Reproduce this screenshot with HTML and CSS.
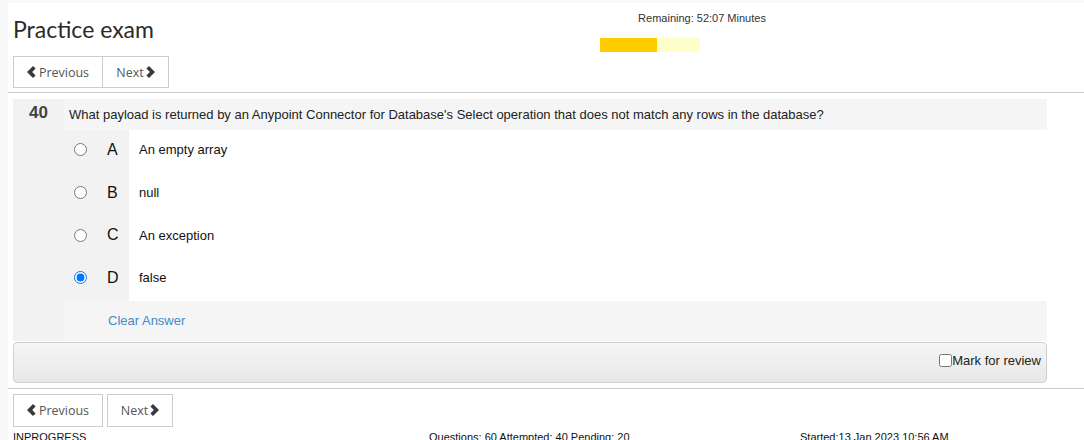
FILE: index.html
```html
<!DOCTYPE html>
<html lang="en">
<head>
<meta charset="utf-8">
<title>Practice exam</title>
<link rel="stylesheet" href="styles.css">
</head>
<body>
<div class="page">
  <header class="top">
    <div class="title-block">
      <h1 class="title">Practice exam</h1>
      <div class="btn-group">
        <button class="btn btn-prev" type="button"><svg class="chev" viewBox="0 0 9 12" width="9" height="12"><polygon points="0,6 6,0 8.6,2.6 5.2,6 8.6,9.4 6,12"/></svg>Previous</button>
        <button class="btn btn-next" type="button">Next<svg class="chev" viewBox="0 0 9 12" width="9" height="12"><polygon points="9,6 3,0 0.4,2.6 3.8,6 0.4,9.4 3,12"/></svg></button>
      </div>
    </div>
    <div class="timer">
      <div class="remaining">Remaining: 52:07 Minutes</div>
      <div class="bar"><div class="bar-fill" style="width:57px"></div></div>
    </div>
  </header>
  <hr class="rule rule-top">
  <main class="main">
    <div class="question">
      <div class="qnum">40</div>
      <div class="qbody">
        <div class="qtext">What payload is returned by an Anypoint Connector for Database's Select operation that does not match any rows in the database?</div>
        <div class="option">
          <label class="opt-key"><input type="radio" name="ans"><span class="letter">A</span></label>
          <div class="opt-text">An empty array</div>
        </div>
        <div class="option">
          <label class="opt-key"><input type="radio" name="ans"><span class="letter">B</span></label>
          <div class="opt-text">null</div>
        </div>
        <div class="option">
          <label class="opt-key"><input type="radio" name="ans"><span class="letter">C</span></label>
          <div class="opt-text">An exception</div>
        </div>
        <div class="option">
          <label class="opt-key"><input type="radio" name="ans" checked><span class="letter">D</span></label>
          <div class="opt-text">false</div>
        </div>
        <div class="clear"><a class="clear-link" href="#">Clear Answer</a></div>
      </div>
    </div>
    <div class="review">
      <label class="review-label"><input type="checkbox" class="review-check">Mark for review</label>
    </div>
  </main>
  <hr class="rule rule-bottom">
  <div class="main">
    <div class="nav-bottom">
      <button class="btn btn-prev" type="button"><svg class="chev" viewBox="0 0 9 12" width="9" height="12"><polygon points="0,6 6,0 8.6,2.6 5.2,6 8.6,9.4 6,12"/></svg>Previous</button>
      <button class="btn btn-next btn-next-b" type="button">Next<svg class="chev" viewBox="0 0 9 12" width="9" height="12"><polygon points="9,6 3,0 0.4,2.6 3.8,6 0.4,9.4 3,12"/></svg></button>
    </div>
    <div class="status">
      <div class="status-state">INPROGRESS</div>
      <div class="status-count">Questions: 60 Attempted: 40 Pending: 20</div>
      <div class="status-start">Started:13 Jan 2023 10:56 AM</div>
    </div>
  </div>
</div>
</body>
</html>
```

FILE: styles.css
```css
html, body {
  margin: 0;
  padding: 0;
}
body {
  background: #f8f8f8;
  font-family: "Liberation Sans", Arial, sans-serif;
  color: #222;
  overflow: hidden;
}
.page {
  margin: 3px 0 0 8px;
  background: #fff;
  height: 437px;
}
.top {
  display: flex;
  padding-left: 5px;
}
.title-block {
  width: 587px;
}
.title {
  margin: 13px 0 0 0;
  font-family: Lato, "Open Sans", sans-serif;
  font-weight: 400;
  font-size: 23px;
  line-height: 26px;
  color: #2a2a2a;
}
.btn-group {
  display: flex;
  margin-top: 14px;
}
.btn {
  display: flex;
  align-items: center;
  justify-content: center;
  height: 32px;
  padding: 0;
  margin: 0;
  border: 1px solid #ccc;
  background: #fff;
  color: #555;
  font-family: "Open Sans", sans-serif;
  font-size: 12.5px;
  cursor: pointer;
}
.btn-prev {
  width: 90px;
}
.btn-next {
  width: 67px;
  margin-left: -1px;
}
.chev {
  fill: #3a3a3a;
  display: block;
}
.btn-prev .chev {
  margin-right: 3px;
}
.btn-next .chev {
  margin-left: 2px;
}
.timer {
  width: 204px;
}
.remaining {
  margin-top: 9px;
  font-size: 11px;
  line-height: 13px;
  color: #333;
  text-align: center;
}
.bar {
  margin-top: 13px;
  width: 100px;
  height: 14px;
  background: #ffffcc;
}
.bar-fill {
  height: 100%;
  background: #ffcc00;
}
.rule {
  border: 0;
  border-top: 1px solid #ccc;
  height: 0;
}
.rule-top {
  margin: 4px 0 6px 0;
}
.rule-bottom {
  margin: 5px 0 5px 0;
}
.main {
  padding-left: 5px;
}
.question {
  display: grid;
  grid-template-columns: 51px 983px;
  width: 1034px;
}
.qnum {
  background: #f2f2f2;
  text-align: center;
  font-weight: bold;
  font-size: 17px;
  line-height: 27px;
  color: #444;
}
.qtext {
  background: #f5f5f5;
  padding-left: 5px;
  font-size: 13px;
  line-height: 31px;
  color: #222;
}
.option {
  display: grid;
  grid-template-columns: 65px 1fr;
  height: 42.7px;
}
.opt-key {
  display: flex;
  align-items: center;
  background: #f2f2f2;
  padding-bottom: 3px;
  box-sizing: border-box;
}
.opt-key input {
  margin: 0 0 0 10px;
  width: 13px;
  height: 13px;
}
.letter {
  margin-left: 20px;
  font-size: 16px;
  color: #111;
}
.opt-text {
  display: flex;
  align-items: center;
  padding-left: 10px;
  padding-bottom: 3px;
  font-size: 13px;
  color: #111;
  background: #fff;
}
.clear {
  background: #f5f5f5;
  height: 40px;
  line-height: 40px;
  padding-left: 44px;
  font-size: 13px;
}
.clear-link {
  color: #428bca;
  text-decoration: none;
}
.review {
  margin-top: 1px;
  width: 1034px;
  height: 41px;
  box-sizing: border-box;
  border: 1px solid #d0d0d0;
  border-radius: 4px;
  background: linear-gradient(#f5f5f5, #e8e8e8);
  display: flex;
  justify-content: flex-end;
  align-items: center;
  padding-right: 5px;
  padding-bottom: 4px;
}
.review-label {
  display: flex;
  align-items: center;
  font-size: 13px;
  color: #222;
}
.review-check {
  margin: 0;
  width: 13px;
  height: 13px;
}
.nav-bottom {
  display: flex;
}
.nav-bottom .btn {
  height: 33px;
}
.btn-next-b {
  width: 66px;
  margin-left: 4px;
}
.status {
  display: grid;
  grid-template-columns: 416px 371px 1fr;
  margin-top: 4px;
  font-size: 11px;
  line-height: 13px;
  color: #111;
}
```
